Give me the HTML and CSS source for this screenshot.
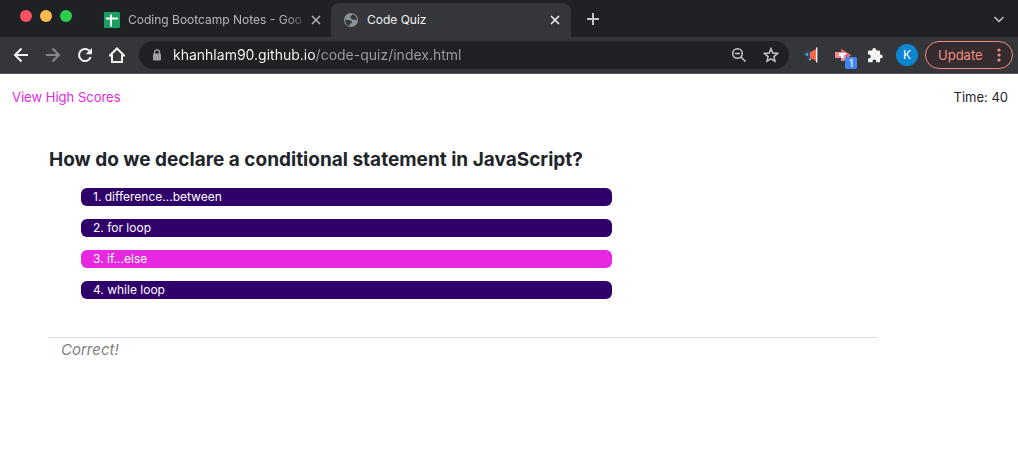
FILE: index.html
```html
<!DOCTYPE html>
<html lang="en">
<head>
<meta charset="utf-8">
<meta name="viewport" content="width=device-width, initial-scale=1">
<title>Code Quiz</title>
<link rel="stylesheet" href="styles.css">
</head>
<body>
<header class="browser">
  <div class="tabstrip">
    <div class="lights">
      <button class="light light-close" aria-label="Close window"></button>
      <button class="light light-min" aria-label="Minimize window"></button>
      <button class="light light-max" aria-label="Zoom window"></button>
    </div>
    <div class="tab">
      <button class="tab-label">
        <svg class="icon16" viewBox="0 0 16 16" aria-hidden="true"><rect width="16" height="16" rx="1" fill="#18a05e"/><path d="M2 6.500h12M7 2.500v12" stroke="#fff" stroke-width="2" fill="none"/></svg>
        <span class="tab-title tab-title-fade">Coding Bootcamp Notes - Goo</span>
      </button>
      <button class="tab-x" aria-label="Close tab"><svg class="icon12" viewBox="0 0 12 12"><path d="M2 2l8 8M10 2l-8 8"/></svg></button>
    </div>
    <div class="tab tab-active">
      <button class="tab-label">
        <svg class="icon16" viewBox="0 0 16 16" aria-hidden="true"><circle cx="8" cy="8" r="7" fill="#8a9197"/><path d="M2.200 7.800l4.800.4 2 1.600-.3 1.400-2 .6-.2 2.400C3.800 13.300 2 11 2.200 7.800z M9.200 2.200L8.600 3.800 7.200 5l.8 1.200 1.800 1.600 2.200-.2 1.800 1.200c.4-3.300-1.500-5.900-4.600-6.600z" fill="#35363a"/></svg>
        <span class="tab-title">Code Quiz</span>
      </button>
      <button class="tab-x" aria-label="Close tab"><svg class="icon12" viewBox="0 0 12 12"><path d="M2 2l8 8M10 2l-8 8"/></svg></button>
    </div>
    <button class="icon-button new-tab" aria-label="New tab"><svg class="icon16" viewBox="0 0 16 16"><path d="M8 2v12M2 8h12"/></svg></button>
    <button class="icon-button tab-search thin" aria-label="Search tabs"><svg class="icon16" viewBox="0 0 16 16"><path d="M3.500 6L8 10.500 12.500 6"/></svg></button>
  </div>

  <div class="toolbar">
    <button class="icon-button" aria-label="Back"><svg class="icon16" viewBox="0 0 16 16"><path d="M15 8H2.500M8.500 1.500L2 8l6.500 6.500"/></svg></button>
    <button class="icon-button dim" aria-label="Forward"><svg class="icon16" viewBox="0 0 16 16"><path d="M1 8h12.500M7.500 1.500L14 8l-6.500 6.500"/></svg></button>
    <button class="icon-button" aria-label="Reload"><svg class="icon16" viewBox="0 0 16 16"><path d="M13.700 10A6 6 0 1 1 12.300 3.800"/><path class="solid" d="M15 1v6.300H8.700z"/></svg></button>
    <button class="icon-button" aria-label="Home"><svg class="icon16" viewBox="0 0 16 16"><path d="M.8 8.500L8 1.500l7.200 7H13V15H3V8.500z"/></svg></button>
    <form class="omnibox">
      <svg class="lock" viewBox="0 0 10 12" aria-hidden="true"><path d="M2.500 5V3.300a2.500 2.500 0 0 1 5 0V5" fill="none" stroke="#9aa0a6" stroke-width="1.300"/><rect x="1" y="4.500" width="8" height="7" rx="1" fill="#9aa0a6"/></svg>
      <input class="address" type="text" aria-label="Address" value="khanhlam90.github.io/code-quiz/index.html">
      <button type="button" class="icon-button thin" aria-label="Zoom out"><svg class="icon16" viewBox="0 0 16 16"><circle cx="6.500" cy="6.500" r="4.800"/><path d="M10 10l4.500 4.500M4 6.500h5"/></svg></button>
      <button type="button" class="icon-button thin" aria-label="Bookmark this page"><svg class="icon16" viewBox="0 0 16 16"><path d="M8 1.800l1.800 4.300 4.700.4-3.600 3.100 1.100 4.600L8 11.800l-4 2.400 1.100-4.600L1.500 6.500l4.700-.4z"/></svg></button>
    </form>
    <div class="extensions">
      <button class="icon-button" aria-label="Megaphone extension"><svg class="icon16" viewBox="0 0 16 16"><path class="bare" fill="#ff6848" d="M7 5.500L13 2v12l-6-3.500z"/><path class="bare" fill="#244968" d="M7 4.700a3.200 3.200 0 0 0-5.200 4.200L4 10l1 4.800h2l-.6-4.100L7 10z"/><circle class="bare" cx="4" cy="7.500" r="1.400" fill="#7895ad"/><path class="bare" fill="#eee" d="M13 .500h1.400v15H13zM6.500 11.500h1.500V13H6.500z"/></svg></button>
      <button class="icon-button badge-host" aria-label="Arrow extension, 1 notification"><svg class="icon16" viewBox="0 0 16 16"><path class="bare" fill="#f58c95" d="M0 5h6V2l10 6-7 6H6v-3H0z"/><path class="bare" fill="#e65b6b" d="M6 2l5 3H6zM10 7h6l-5 4z"/><path class="bare" fill="#fff" d="M4 6h7v2H9v3H6V9H4z"/></svg><span class="badge">1</span></button>
      <button class="icon-button" aria-label="Extensions"><svg class="icon16" viewBox="0 0 16 16"><path class="solid" d="M1 4.500Q1 3.500 2 3.500h3.300V2.800a1.900 1.900 0 0 1 3.800 0v.7h3q1 0 1 1v3h.7a1.900 1.900 0 0 1 0 3.800h-.7v3q0 1-1 1H9.300v-.8a1.900 1.900 0 0 0-3.800 0v.8H2q-1 0-1-1v-2.800h.8a2 2 0 0 0 0-4H1z"/></svg></button>
      <button class="avatar" aria-label="Profile K">K</button>
      <button class="update">Update<svg class="dots" viewBox="0 0 4 16" aria-hidden="true"><circle cx="2" cy="3" r="1.600"/><circle cx="2" cy="8" r="1.600"/><circle cx="2" cy="13" r="1.600"/></svg></button>
    </div>
  </div>
</header>

<nav class="topbar">
  <a class="scores" href="#scores">View High Scores</a>
  <span>Time: 40</span>
</nav>
<main class="quiz">
  <h1 class="question">How do we declare a conditional statement in JavaScript?</h1>
  <div class="answers">
    <button class="answer">1. difference...between</button>
    <button class="answer">2. for loop</button>
    <button class="answer answer-picked">3. if...else</button>
    <button class="answer">4. while loop</button>
  </div>
  <p class="result">Correct!</p>
</main>
</body>
</html>
```
FILE: styles.css
```css
* { box-sizing: border-box; }
body {
  margin: 0;
  background: #fff;
  color: #212529;
  font: 13px/20px Inter, "Liberation Sans", sans-serif;
}
button, input {
  margin: 0;
  padding: 0;
  border: 0;
  background: none;
  color: inherit;
  font: inherit;
}
svg { display: block; flex: none; }

/* Browser frame */
.browser { background: #35363a; color: #f1f3f4; border-bottom: 1px solid #55565a; }
.tabstrip {
  display: flex;
  align-items: flex-end;
  height: 37px;
  background: linear-gradient(#202124, #202124);
}
.lights { display: flex; gap: 8px; align-self: flex-start; padding: 10px 0 0 20px; margin-right: 20px; }
.light { width: 12px; height: 12px; border-radius: 50%; }
.light-close { background: #ff5260; }
.light-min { background: #ffbb4c; }
.light-max { background: #2dce4e; }
.tab {
  display: flex;
  align-items: center;
  width: 240px;
  height: 34px;
  padding: 0 10px 0 12px;
  color: #b4b6ba;
  font-size: 12px;
}
.tab:not(.tab-active) { width: 239px; padding-right: 9px; }
.tab-active { background: #35363a; color: #f1f3f4; border-radius: 8px 8px 0 0; }
.tab-label { display: flex; align-items: center; gap: 8px; flex: 1; min-width: 0; text-align: left; }
.tab-title { flex: 1; white-space: nowrap; }
.tab-title-fade { -webkit-mask-image: linear-gradient(90deg, #000 86%, transparent); mask-image: linear-gradient(90deg, #000 86%, transparent); }
.tab-x svg, .icon-button svg { fill: none; stroke: currentColor; stroke-width: 2; }
.tab-x svg { stroke-width: 1.5; }
.icon12 { width: 12px; height: 12px; }
.icon16 { width: 16px; height: 16px; }
.icon-button { display: flex; align-items: center; justify-content: center; flex: none; width: 32px; height: 28px; }
.icon-button .solid { fill: currentColor; stroke: none; }
.icon-button .bare { stroke: none; }
.new-tab { align-self: center; margin-left: 6px; color: #c4c6c9; }
.tab-search { align-self: center; margin: 0 3px 0 auto; color: #c4c6c9; }
.toolbar { display: flex; align-items: center; height: 36px; padding: 0 5px; }
.dim { color: #85868a; }
.omnibox {
  display: flex;
  align-items: center;
  flex: 1;
  min-width: 0;
  height: 28px;
  margin-left: 6px;
  padding: 0 2px 0 13px;
  border-radius: 14px;
  background: #202124;
}
.lock { width: 10px; height: 12px; margin-right: 11px; }
.address {
  flex: 1;
  min-width: 0;
  font: 14px/20px Inter, "Liberation Sans", sans-serif;
  color: transparent;
  background: linear-gradient(90deg, #fff 143px, #9aa0a6 143px);
  -webkit-background-clip: text;
  background-clip: text;
}
.thin { color: #c4c6c9; }
.icon-button.thin svg { stroke-width: 1.5; }
.extensions { display: flex; align-items: center; margin-left: 6px; }
.badge-host { position: relative; }
.badge {
  position: absolute;
  right: 2px;
  bottom: 0;
  width: 12px;
  height: 12px;
  border-radius: 2px;
  background: #4285f4;
  color: #fff;
  font-size: 10px;
  line-height: 12px;
}
.avatar { width: 22px; height: 22px; margin: 0 7px 0 5px; border-radius: 50%; background: #0c86d0; color: #fff; font-size: 12px; }
.update {
  display: flex;
  align-items: center;
  justify-content: space-between;
  width: 88px;
  height: 28px;
  padding: 0 11px 0 12px;
  border: 1px solid #f28b82;
  border-radius: 14px;
  background: #352c30;
  color: #f28b82;
}
.dots { width: 4px; height: 16px; fill: currentColor; }

/* Quiz page */
.topbar { display: flex; justify-content: space-between; padding: 13px 10px 13px 12px; }
.scores { color: #e629e0; text-decoration: none; }
.quiz { width: 86.2%; padding: 27px 0 0 49px; }
.question { margin: 0; font-size: 19px; line-height: 26px; font-weight: 700; }
.answers { display: grid; gap: 13px; width: 68%; margin: 15px 0 38px; padding-left: 32px; }
.answer {
  height: 18px;
  padding: 0 12px;
  border-radius: 6px;
  background: #2f0069;
  color: #fff;
  font-size: 12px;
  line-height: 18px;
  text-align: left;
}
.answer-picked { background: #e629e0; }
.result { margin: 0; padding: 0 12px; border-top: 1px solid #dedede; color: #808080; font-size: 15px; line-height: 24px; font-style: italic; }
```
